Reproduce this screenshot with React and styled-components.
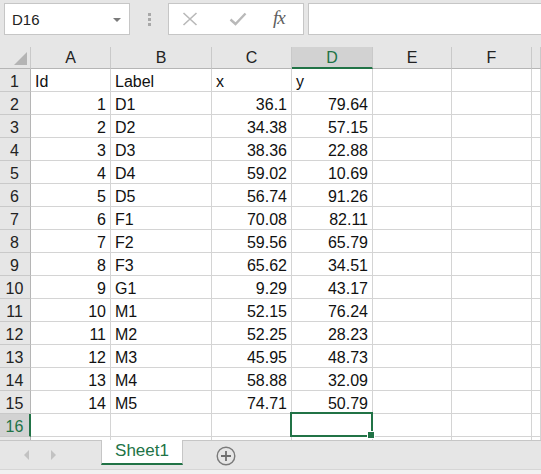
import React from "react";
import styled, { createGlobalStyle } from "styled-components";

const GlobalStyle = createGlobalStyle`
  html, body {
    margin: 0;
    padding: 0;
    background: #e6e6e6;
    overflow: hidden;
  }
  * {
    box-sizing: border-box;
  }
`;

const GREEN = "#217346";
const GRID = "#d4d4d4";

const Window = styled.div`
  width: 541px;
  height: 474px;
  display: flex;
  flex-direction: column;
  font-family: "Liberation Sans", Arial, sans-serif;
  background: #e6e6e6;
  overflow: hidden;
`;

const Toolbar = styled.div`
  height: 47px;
  display: flex;
  align-items: flex-start;
  padding: 3px 0 0 4px;
`;

const NameBox = styled.div`
  width: 126px;
  height: 32px;
  background: #fff;
  border: 1px solid #c6c6c6;
  display: flex;
  align-items: center;
  justify-content: space-between;
  padding: 0 8px 0 7px;
  font-size: 15px;
  color: #222;
`;

const DropArrow = styled.span`
  width: 0;
  height: 0;
  border-left: 4px solid transparent;
  border-right: 4px solid transparent;
  border-top: 4px solid #7a7a7a;
  margin-top: 1px;
`;

const Grip = styled.div`
  width: 38px;
  height: 32px;
  display: flex;
  flex-direction: column;
  align-items: center;
  justify-content: center;
  gap: 2px;
  padding-left: 1px;

  span {
    width: 3px;
    height: 3px;
    background: #a8a8a8;
  }
`;

const FormulaButtons = styled.div`
  width: 136px;
  height: 32px;
  background: #fff;
  border: 1px solid #c6c6c6;
  display: flex;
  align-items: center;
  padding-left: 13px;
`;

const IconSlot = styled.div`
  width: ${(p) => p.$w}px;
  display: flex;
  align-items: center;
`;

const Fx = styled.span`
  font-family: "Liberation Serif", "Times New Roman", serif;
  font-style: italic;
  font-size: 19px;
  color: #5e5e5e;
  letter-spacing: -1px;
  margin-top: -2px;
`;

const FormulaInput = styled.div`
  flex: 1;
  height: 32px;
  margin-left: 4px;
  background: #fff;
  border: 1px solid #c6c6c6;
  border-right: none;
`;

const Sheet = styled.div`
  height: 393px;
  overflow: hidden;
  display: grid;
  grid-template-columns: 31px 80px 101px 80px 81px 79px 80px 1fr;
  grid-auto-rows: 23px;
  grid-template-rows: 22px;
  background: #fff;
`;

const Corner = styled.div`
  background: #e6e6e6;
  border-right: 1px solid #c9c9c9;
  border-bottom: 1px solid #b5b5b5;
  display: flex;
  align-items: flex-end;
  justify-content: flex-end;
  padding: 0 3px 3px 0;
`;

const ColHead = styled.div`
  background: ${(p) => (p.$active ? "#d2d2d2" : "#e6e6e6")};
  color: ${(p) => (p.$active ? GREEN : "#222")};
  border-right: 1px solid #c9c9c9;
  border-bottom: ${(p) => (p.$active ? `2px solid ${GREEN}` : "1px solid #b5b5b5")};
  font-size: 16px;
  line-height: 21px;
  text-align: center;
`;

const RowHead = styled.div`
  background: ${(p) => (p.$active ? "#d2d2d2" : "#e6e6e6")};
  color: ${(p) => (p.$active ? GREEN : "#222")};
  border-right: ${(p) => (p.$active ? `2px solid ${GREEN}` : "1px solid #b5b5b5")};
  border-bottom: 1px solid #c9c9c9;
  font-size: 16px;
  display: flex;
  align-items: flex-end;
  justify-content: center;
  line-height: 19px;
  padding-right: ${(p) => (p.$active ? "0" : "1px")};
`;

const Cell = styled.div`
  position: relative;
  border-right: 1px solid ${GRID};
  border-bottom: 1px solid ${GRID};
  font-size: 16px;
  line-height: 19px;
  color: #111;
  display: flex;
  align-items: flex-end;
  justify-content: ${(p) => (p.$num ? "flex-end" : "flex-start")};
  padding: 0 4px;
  white-space: nowrap;

  ${(p) =>
    p.$selected &&
    `
    &::after {
      content: "";
      position: absolute;
      left: -2px;
      top: -2px;
      right: -1px;
      bottom: -1px;
      border: 2px solid ${GREEN};
      pointer-events: none;
    }
    &::before {
      content: "";
      position: absolute;
      right: -3px;
      bottom: -3px;
      width: 6px;
      height: 6px;
      background: ${GREEN};
      border: 1px solid #fff;
      z-index: 2;
    }
  `}
`;

const TabBar = styled.div`
  height: 29px;
  border-top: 1px solid #c6c6c6;
  display: flex;
  align-items: flex-start;
`;

const Nav = styled.div`
  width: 101px;
  height: 28px;
  display: flex;
  align-items: center;
  padding-left: 24px;
  gap: 22px;
`;

const NavArrow = styled.span`
  width: 0;
  height: 0;
  border-top: 5px solid transparent;
  border-bottom: 5px solid transparent;
  ${(p) =>
    p.$dir === "left"
      ? "border-right: 5px solid #c2c2c2;"
      : "border-left: 5px solid #c2c2c2;"}
`;

const Tab = styled.div`
  width: 82px;
  height: 25px;
  margin-top: -1px;
  background: #fff;
  border-left: 1px solid #c6c6c6;
  border-right: 1px solid #c6c6c6;
  border-bottom: 2px solid ${GREEN};
  color: ${GREEN};
  font-size: 17px;
  display: flex;
  align-items: center;
  justify-content: center;
  padding-bottom: 2px;
`;

const AddSheet = styled.div`
  margin-left: 33px;
  margin-top: 5px;
  display: flex;
`;

const StatusStrip = styled.div`
  flex: 1;
  border-top: 1px solid #d6d6d6;
  background: #f1f1f1;
`;

const rows = [
  [1, "D1", 36.1, 79.64],
  [2, "D2", 34.38, 57.15],
  [3, "D3", 38.36, 22.88],
  [4, "D4", 59.02, 10.69],
  [5, "D5", 56.74, 91.26],
  [6, "F1", 70.08, 82.11],
  [7, "F2", 59.56, 65.79],
  [8, "F3", 65.62, 34.51],
  [9, "G1", 9.29, 43.17],
  [10, "M1", 52.15, 76.24],
  [11, "M2", 52.25, 28.23],
  [12, "M3", 45.95, 48.73],
  [13, "M4", 58.88, 32.09],
  [14, "M5", 74.71, 50.79],
];

const columns = ["A", "B", "C", "D", "E", "F", ""];

// row 17 only peeks out under the grid, so it gets no number
function renderRow(rowNum, values) {
  const active = rowNum === 16;
  return (
    <React.Fragment key={rowNum}>
      <RowHead $active={active}>{rowNum < 17 ? rowNum : ""}</RowHead>
      {values.map((v, i) => (
        <Cell
          key={i}
          $num={typeof v === "number"}
          $selected={active && i === 3}
        >
          {v}
        </Cell>
      ))}
    </React.Fragment>
  );
}

export default function App() {
  const empty = ["", "", "", "", "", "", ""];
  const body = [
    ["Id", "Label", "x", "y", "", "", ""],
    ...rows.map((r) => [...r, "", "", ""]),
    empty,
    empty,
  ];

  return (
    <Window>
      <GlobalStyle />
      <Toolbar>
        <NameBox>
          D16
          <DropArrow />
        </NameBox>
        <Grip>
          <span />
          <span />
          <span />
        </Grip>
        <FormulaButtons>
          <IconSlot $w={47}>
            <svg width="16" height="14" viewBox="0 0 16 14">
              <path d="M1.5 1 L14.5 13 M14.5 1 L1.5 13" stroke="#b9b9b9" strokeWidth="1.6" fill="none" />
            </svg>
          </IconSlot>
          <IconSlot $w={44}>
            <svg width="18" height="14" viewBox="0 0 18 14">
              <path d="M1.5 7.5 L6.5 12 L16.5 1.5" stroke="#b9b9b9" strokeWidth="2.4" fill="none" />
            </svg>
          </IconSlot>
          <IconSlot $w={30}>
            <Fx>fx</Fx>
          </IconSlot>
        </FormulaButtons>
        <FormulaInput />
      </Toolbar>

      <Sheet>
        <Corner>
          <svg width="13" height="13" viewBox="0 0 13 13">
            <polygon points="13,0 13,13 0,13" fill="#b4b4b4" />
          </svg>
        </Corner>
        {columns.map((c, i) => (
          <ColHead key={i} $active={c === "D"}>
            {c}
          </ColHead>
        ))}
        {body.map((vals, i) => renderRow(i + 1, vals))}
      </Sheet>

      <TabBar>
        <Nav>
          <NavArrow $dir="left" />
          <NavArrow $dir="right" />
        </Nav>
        <Tab>Sheet1</Tab>
        <AddSheet>
          <svg width="20" height="20" viewBox="0 0 20 20">
            <circle cx="10" cy="10" r="8.8" stroke="#7a7a7a" strokeWidth="1.4" fill="none" />
            <path d="M10 5 V15 M5 10 H15" stroke="#6e6e6e" strokeWidth="1.8" />
          </svg>
        </AddSheet>
      </TabBar>
      <StatusStrip />
    </Window>
  );
}
